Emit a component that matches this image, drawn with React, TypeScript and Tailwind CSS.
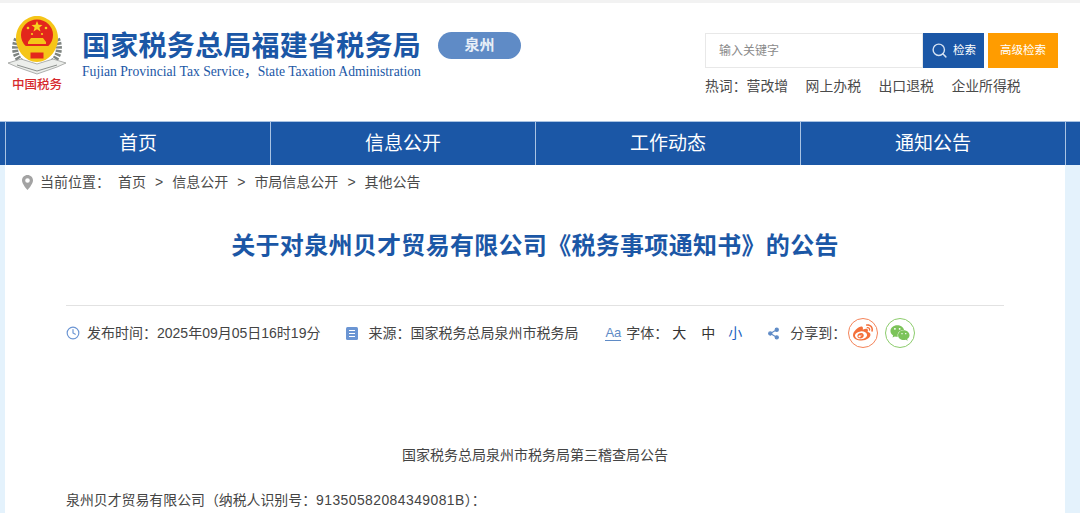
import React from 'react';
import { Search, Clock, Share2 } from 'lucide-react';
import { FaWeibo, FaWeixin } from 'react-icons/fa';

const CJK = 'font-["Liberation_Sans","Noto_Sans_CJK_SC",sans-serif]';

const navItems = ['首页', '信息公开', '工作动态', '通知公告'];
const hotWords = ['营改增', '网上办税', '出口退税', '企业所得税'];
const crumbs = ['信息公开', '市局信息公开', '其他公告'];

function Emblem() {
  return (
    <div className="flex w-[58px] flex-col items-center">
      <svg width="58" height="60" viewBox="0 0 58 60">
        <path d="M9 24c-4 9-2 20 8 25M49 24c4 9 2 20-8 25" fill="none" stroke="#7f8582" strokeWidth="6" strokeDasharray="2.5 1.2" />
        <path d="M0 48l13-4 16 5 16-5 13 4-9 4-20 7-20-7z" fill="#eceeeb" stroke="#9a9d9b" strokeWidth="0.8" />
        <path d="M9 50l20 6 20-6" fill="none" stroke="#8b8f8c" strokeWidth="1" />
        <path d="M29 1c6 0 8 2 12 4 5 4 9 10 9 18 0 12-9 24-21 24S8 35 8 23C8 15 12 9 17 5c4-2 6-4 12-4z" fill="#f5c518" />
        <ellipse cx="29" cy="20" rx="16" ry="15.5" fill="#e3261c" />
        <path d="M29 6l1.5 3.8 4 .2-3.100 2.500 1.100 3.900-3.500-2.200-3.500 2.200 1.100-3.900-3.100-2.500 4-.2z" fill="#f7d21e" />
        <circle cx="20" cy="13" r="1.300" fill="#f7d21e" />
        <circle cx="38" cy="13" r="1.300" fill="#f7d21e" />
        <circle cx="24" cy="19" r="1.100" fill="#f7d21e" />
        <circle cx="34" cy="19" r="1.100" fill="#f7d21e" />
        <path d="M20 27l3-4h12l3 4v2H20z" fill="#f5c518" />
        <path d="M17 31h24l-2 5H19z" fill="#f5c518" />
        <path d="M22 37h14v7H22z" fill="#e3261c" stroke="#f5c518" strokeWidth="1" />
      </svg>
      <div className='mt-[2px] whitespace-nowrap font-["Liberation_Serif","Noto_Sans_CJK_SC",serif] text-[12.5px] font-medium leading-[16px] text-[#d6282c]'>中国税务</div>
    </div>
  );
}

function Header() {
  return (
    <header className="flex h-[118px] bg-white">
      <div className="ml-[8px] mt-[12px]">
        <Emblem />
      </div>
      <div className="ml-[16px] mt-[25px] w-[340px]">
        <h1 className="whitespace-nowrap text-[28px] font-bold leading-[38px] tracking-[0.25px] text-[#1b57a6]">国家税务总局福建省税务局</h1>
        <p className='mt-[-2px] whitespace-nowrap font-["Liberation_Serif","Noto_Sans_CJK_SC",serif] text-[13.65px] leading-[16px] text-[#1b57a6]'>Fujian Provincial Tax Service，State Taxation Administration</p>
      </div>
      <div className="ml-[16px] mt-[29px] flex h-[27px] w-[83px] items-center justify-center rounded-full bg-[#5f8bc6] text-[15px] font-bold text-[#e8eff8]">泉州</div>
      <div className="ml-auto mr-[22px] mt-[30px] w-[353px]">
        <div className="flex h-[35px]">
          <div className="flex w-[218px] items-center border border-[#e8e8e8] pl-[13px] text-[12px] text-[#8a8a8a]">输入关键字</div>
          <button className="flex w-[61px] items-center justify-center gap-[5px] bg-[#1b57a6] text-[11.5px] text-white">
            <Search className="h-[17px] w-[17px] text-[#d5e2f3]" strokeWidth={2} />
            检索
          </button>
          <button className="ml-[4px] flex w-[70px] items-center justify-center bg-[#ff9c00] text-[11.5px] text-white">高级检索</button>
        </div>
        <div className="mt-[8px] flex text-[13.85px] leading-[20px] text-[#4a4a4a]">
          <span>热词：</span>
          <div className="flex gap-[17.5px]">
            {hotWords.map((word) => (
              <a key={word}>{word}</a>
            ))}
          </div>
        </div>
      </div>
    </header>
  );
}

function Nav() {
  return (
    <nav className="flex h-[44px] border-t border-[#a9c3e3] bg-[#1b57a6]">
      <div className="w-[5px]" />
      {navItems.map((item) => (
        <div key={item} className="flex h-full w-[265px] items-center justify-center border-l border-[#a9c3e3] pt-[1px] text-[19px] text-white">
          {item}
        </div>
      ))}
      <div className="flex-1 border-l border-[#a9c3e3]" />
    </nav>
  );
}

function Breadcrumb() {
  return (
    <div className="flex h-[35px] items-center pl-[17px] text-[14px] text-[#4a4a4a]">
      <svg width="11" height="15" viewBox="0 0 11 15">
        <path fillRule="evenodd" d="M5.500 0C2.500 0 0 2.400 0 5.400 0 9 5.500 15 5.500 15S11 9 11 5.400C11 2.400 8.500 0 5.500 0zm0 3.200a2.300 2.300 0 110 4.600 2.300 2.300 0 010-4.600z" fill="#a3a3a3" />
      </svg>
      <span className="ml-[7px] w-[78px]">当前位置：</span>
      <span>首页</span>
      {crumbs.map((c) => (
        <React.Fragment key={c}>
          <span className="mx-[9px]">&gt;</span>
          <span>{c}</span>
        </React.Fragment>
      ))}
    </div>
  );
}

function MetaBar() {
  return (
    <div className="mt-[12px] flex h-[30px] items-center text-[14px] text-[#444]">
      <Clock className="h-[14px] w-[14px] text-[#6b95d3]" strokeWidth={2} />
      <span className="ml-[7px]">发布时间：2025年09月05日16时19分</span>
      <svg className="ml-[26px]" width="12" height="13" viewBox="0 0 12 13">
        <rect width="12" height="13" rx="1.500" fill="#6b95d3" />
        <path d="M3 3.500h6M3 6.500h6M3 9.500h6" stroke="#fff" strokeWidth="1" />
      </svg>
      <span className="ml-[10px]">来源：国家税务总局泉州市税务局</span>
      <span className="ml-[27px] border-b border-[#5f8bc6] text-[13px] leading-[15px] text-[#5f8bc6]">Aa</span>
      <span className="ml-[5px]">字体：</span>
      <span className="ml-[4px] text-[#333]">大</span>
      <span className="ml-[15px] text-[#333]">中</span>
      <span className="ml-[13px] text-[#1a5fc0]">小</span>
      <Share2 className="ml-[25px] h-[13px] w-[13px] text-[#5f8bc6]" fill="#5f8bc6" />
      <span className="ml-[10px]">分享到：</span>
      <div className="ml-[2px] flex h-[30px] w-[30px] items-center justify-center rounded-full border border-[#f4845a]">
        <FaWeibo className="h-[20px] w-[20px] text-[#f4703a]" />
      </div>
      <div className="ml-[7px] flex h-[30px] w-[30px] items-center justify-center rounded-full border border-[#8ccc6c]">
        <FaWeixin className="h-[20px] w-[20px] text-[#7cc35a]" />
      </div>
    </div>
  );
}

export default function App() {
  return (
    <div className={`h-[513px] w-[1080px] overflow-hidden bg-white ${CJK}`}>
      <div className="h-[3px] bg-[#f2f2f2]" />
      <Header />
      <Nav />
      <div className="flex h-[348px] bg-[#e4f2fc]">
        <main className="ml-[5px] w-[1060px] bg-white">
          <Breadcrumb />
          <h2 className="mt-[28px] text-center text-[24px] font-bold leading-[36px] tracking-[0.3px] text-[#1b57a6]">关于对泉州贝才贸易有限公司《税务事项通知书》的公告</h2>
          <div className="mx-[61px] mt-[41px] border-t border-[#e2e2e2]">
            <MetaBar />
            <p className="mt-[97px] text-center text-[14px] leading-[20px] text-[#444]">国家税务总局泉州市税务局第三稽查局公告</p>
            <p className="mt-[25px] text-[13.9px] leading-[20px] text-[#444]">
              泉州贝才贸易有限公司（纳税人识别号：<span className="tracking-[0.45px]">91350582084349081B</span>）：
            </p>
          </div>
        </main>
      </div>
    </div>
  );
}
